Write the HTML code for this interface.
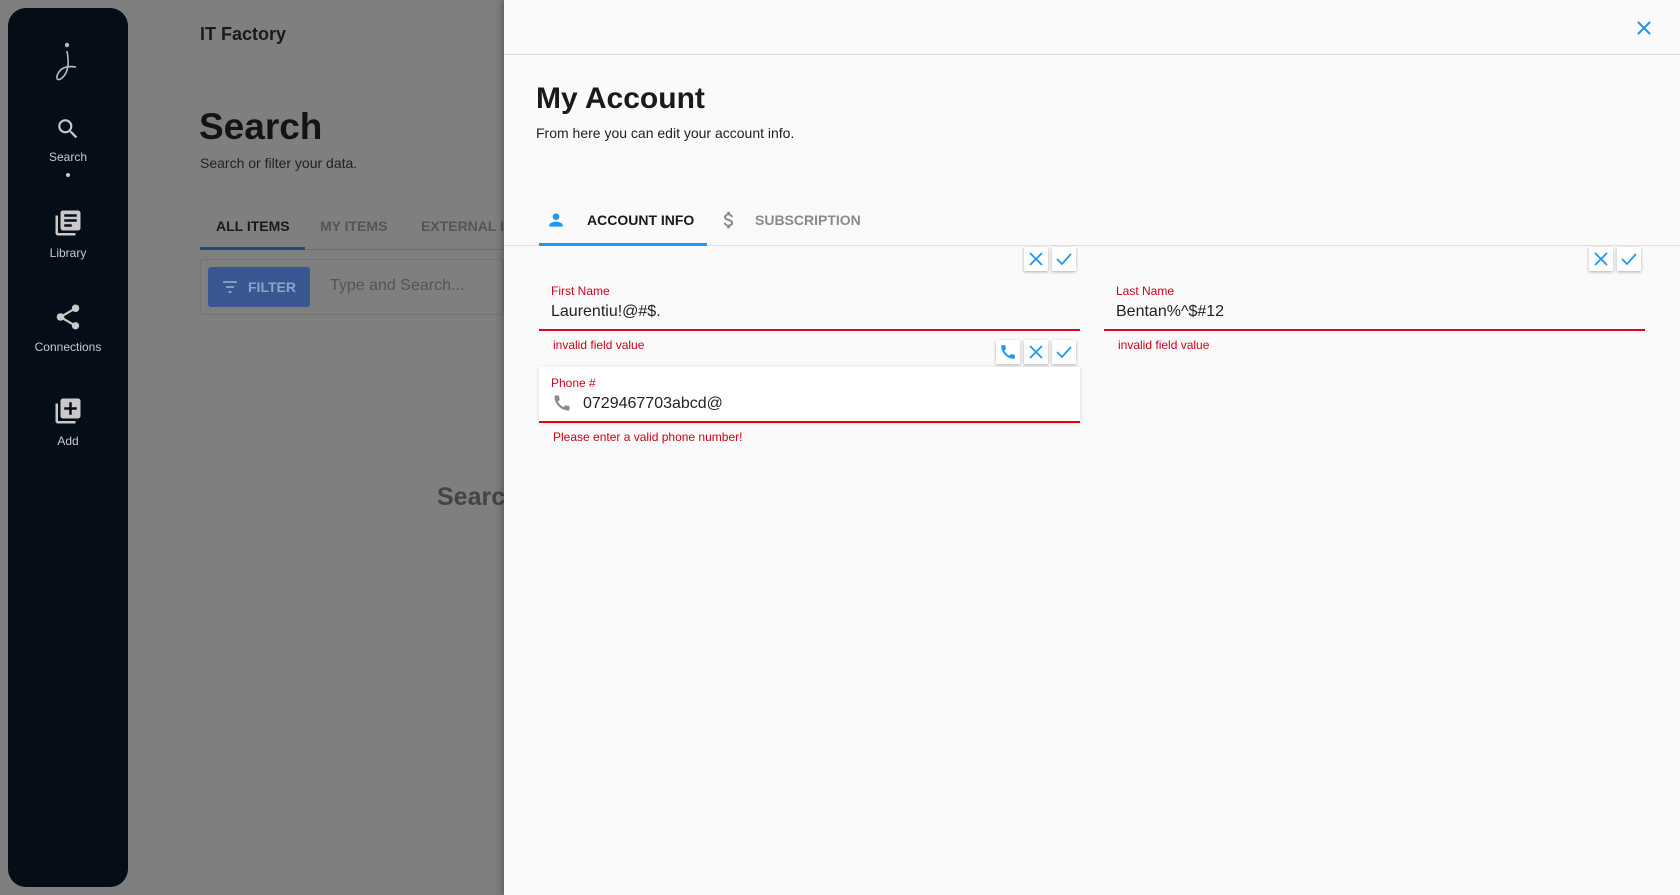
<!DOCTYPE html>
<html><head><meta charset="utf-8"><style>
*{box-sizing:border-box;margin:0;padding:0}
body{width:1680px;height:895px;overflow:hidden;background:#7f7f7f;font-family:"Liberation Sans",Roboto,sans-serif;position:relative}
.a{position:absolute}
.side{left:8px;top:8px;width:120px;height:879px;background:#040d18;border-radius:18px}
.nav{position:absolute;left:0;width:120px;text-align:center;color:#c9c9c9;font-size:12px}
.nav svg{display:block;margin:0 auto 8px}
.panel{left:504px;top:0;width:1176px;height:895px;background:#fafafa;box-shadow:-3px 0 6px rgba(0,0,0,.25)}
.btn{position:absolute;width:24px;height:24px;background:#fff;box-shadow:0 1px 3px rgba(0,0,0,.3);display:flex;align-items:center;justify-content:center}
.lbl{position:absolute;font-size:12px;color:#d0021b}
.val{position:absolute;font-size:16px;color:#222}
.err{position:absolute;font-size:12px;color:#d0021b}
.line{position:absolute;height:2px;background:#e0001b}
</style></head><body>
<div class="a side">
 <svg class="a" style="left:44px;top:26px" width="32" height="50" viewBox="0 0 32 50"><circle cx="15" cy="11" r="2.2" fill="#bbb"/><path d="M15 17 C17 28 17 38 10 44 C5 48 3 44 7 38 C10 33 17 32 24 33" stroke="#bbb" stroke-width="1.6" fill="none"/></svg>
 <div class="nav" style="top:108px"><svg width="26" height="26" viewBox="0 0 24 24"><path fill="#c9c9c9" d="M15.5 14h-.79l-.28-.27A6.47 6.47 0 0 0 16 9.5 6.5 6.5 0 1 0 9.5 16c1.61 0 3.09-.59 4.23-1.57l.27.28v.79l5 4.99L20.49 19l-4.99-5zm-6 0C7.01 14 5 11.99 5 9.5S7.01 5 9.5 5 14 7.01 14 9.5 11.99 14 9.5 14z"/></svg>Search<div style="width:4px;height:4px;border-radius:2px;background:#c9c9c9;margin:9px auto 0"></div></div>
 <div class="nav" style="top:200px"><svg width="30" height="30" viewBox="0 0 24 24"><path fill="#c9c9c9" d="M4 6H2v14c0 1.1.9 2 2 2h14v-2H4V6zm16-4H8c-1.1 0-2 .9-2 2v12c0 1.1.9 2 2 2h12c1.1 0 2-.9 2-2V4c0-1.1-.9-2-2-2zm-1 9H9V9h10v2zm-4 4H9v-2h6v2zm4-8H9V5h10v2z"/></svg>Library</div>
 <div class="nav" style="top:294px"><svg width="30" height="30" viewBox="0 0 24 24"><path fill="#c9c9c9" d="M18 16.08c-.76 0-1.44.3-1.96.77L8.91 12.7c.05-.23.09-.46.09-.7s-.04-.47-.09-.7l7.05-4.11A2.99 2.99 0 0 0 21 5a3 3 0 1 0-5.91.7L8.04 9.81A2.99 2.99 0 0 0 3 12a3 3 0 0 0 5.04 2.19l7.12 4.16c-.05.21-.08.43-.08.65a2.92 2.92 0 1 0 2.92-2.92z"/></svg>Connections</div>
 <div class="nav" style="top:388px"><svg width="30" height="30" viewBox="0 0 24 24"><path fill="#c9c9c9" d="M4 6H2v14c0 1.1.9 2 2 2h14v-2H4V6zm16-4H8c-1.1 0-2 .9-2 2v12c0 1.1.9 2 2 2h12c1.1 0 2-.9 2-2V4c0-1.1-.9-2-2-2zm-1 9h-4v4h-2v-4H9V9h4V5h2v4h4v2z"/></svg>Add</div>
</div>
<div class="a" style="left:200px;top:24px;font-size:18px;font-weight:bold;color:#1a1a1a">IT Factory</div>
<div class="a" style="left:199px;top:106px;font-size:37px;font-weight:bold;color:#141414">Search</div>
<div class="a" style="left:200px;top:155px;font-size:14px;color:#222">Search or filter your data.</div>
<div class="a" style="left:216px;top:218px;font-size:14px;font-weight:bold;color:#1a1a1a">ALL ITEMS</div>
<div class="a" style="left:320px;top:218px;font-size:14px;font-weight:bold;color:#555">MY ITEMS</div>
<div class="a" style="left:421px;top:218px;font-size:14px;font-weight:bold;color:#555">EXTERNAL ITEMS</div>
<div class="a" style="left:200px;top:249px;width:304px;height:1px;background:#6f6f6f"></div>
<div class="a" style="left:200px;top:247px;width:105px;height:3px;background:#1e4b80"></div>
<div class="a" style="left:200px;top:259px;width:304px;height:56px;border:1px solid #747474;border-radius:3px"></div>
<div class="a" style="left:208px;top:267px;width:102px;height:40px;background:#3a5791;border-radius:3px;color:#8ea3c8;font-size:14px;font-weight:bold;line-height:40px;padding-left:40px">FILTER<svg class="a" style="left:14px;top:13px" width="16" height="14" viewBox="0 0 16 14"><path d="M1 2h14M4 7h8M6.5 12h3" stroke="#8ea3c8" stroke-width="1.8"/></svg></div>
<div class="a" style="left:330px;top:277px;font-size:16px;color:#555">Type and Search...</div>
<div class="a" style="left:437px;top:483px;font-size:25px;font-weight:bold;color:#444">Search</div>

<div class="a panel">
 <div class="a" style="left:0;top:54px;width:1176px;height:1px;background:#ddd"></div>
 <svg class="a" style="left:1132px;top:20px" width="16" height="16" viewBox="0 0 16 16"><path d="M2 2L14 14M14 2L2 14" stroke="#2196f3" stroke-width="2"/></svg>
 <div class="a" style="left:32px;top:82px;font-size:30px;font-weight:bold;color:#1a1a1a">My Account</div>
 <div class="a" style="left:32px;top:125px;font-size:14px;color:#222">From here you can edit your account info.</div>
 <svg class="a" style="left:42px;top:210px" width="20" height="20" viewBox="0 0 24 24"><path fill="#2196f3" d="M12 12c2.21 0 4-1.790 4-4s-1.79-4-4-4-4 1.79-4 4 1.79 4 4 4zm0 2c-2.670 0-8 1.34-8 4v2h16v-2c0-2.66-5.33-4-8-4z"/></svg>
 <div class="a" style="left:83px;top:212px;font-size:14px;font-weight:bold;color:#1a1a1a">ACCOUNT INFO</div>
 <svg class="a" style="left:214px;top:209px" width="22" height="22" viewBox="0 0 24 24"><path fill="#8a8a8a" d="M11.8 10.9c-2.27-.59-3-1.2-3-2.15 0-1.09 1.01-1.85 2.7-1.85 1.78 0 2.44.85 2.5 2.1h2.21c-.07-1.72-1.12-3.3-3.21-3.81V3h-3v2.16c-1.94.42-3.5 1.68-3.5 3.61 0 2.31 1.91 3.46 4.7 4.130 2.5.6 3 1.48 3 2.41 0 .69-.49 1.79-2.7 1.79-2.06 0-2.87-.92-2.98-2.1h-2.2c.12 2.19 1.76 3.42 3.68 3.83V21h3v-2.15c1.95-.37 3.5-1.5 3.5-3.55 0-2.84-2.43-3.81-4.7-4.4z"/></svg>
 <div class="a" style="left:251px;top:212px;font-size:14px;font-weight:bold;color:#8a8a8a">SUBSCRIPTION</div>
 <div class="a" style="left:0;top:245px;width:1176px;height:1px;background:#e2e2e2"></div>
 <div class="a" style="left:35px;top:243px;width:168px;height:3px;background:#2196f3"></div>

 <div class="btn" style="left:520px;top:247px"><svg width="14" height="14" viewBox="0 0 14 14"><path d="M1 1L13 13M13 1L1 13" stroke="#2196f3" stroke-width="1.8"/></svg></div>
 <div class="btn" style="left:548px;top:247px"><svg width="16" height="14" viewBox="0 0 16 14"><path d="M1 7L6 12L15 2" stroke="#2196f3" stroke-width="1.8" fill="none"/></svg></div>
 <div class="btn" style="left:1085px;top:247px"><svg width="14" height="14" viewBox="0 0 14 14"><path d="M1 1L13 13M13 1L1 13" stroke="#2196f3" stroke-width="1.8"/></svg></div>
 <div class="btn" style="left:1113px;top:247px"><svg width="16" height="14" viewBox="0 0 16 14"><path d="M1 7L6 12L15 2" stroke="#2196f3" stroke-width="1.8" fill="none"/></svg></div>

 <div class="lbl" style="left:47px;top:284px">First Name</div>
 <div class="val" style="left:47px;top:303px">Laurentiu!@#$.</div>
 <div class="line" style="left:35px;top:329px;width:541px"></div>
 <div class="err" style="left:49px;top:338px">invalid field value</div>

 <div class="lbl" style="left:612px;top:284px">Last Name</div>
 <div class="val" style="left:612px;top:303px">Bentan%^$#12</div>
 <div class="line" style="left:600px;top:329px;width:541px"></div>
 <div class="err" style="left:614px;top:338px">invalid field value</div>

 <div class="btn" style="left:492px;top:340px"><svg width="18" height="18" viewBox="0 0 24 24"><path fill="#2196f3" d="M20.01 15.38c-1.23 0-2.42-.2-3.53-.56a.977.977 0 0 0-1.01.24l-1.57 1.97c-2.83-1.35-5.48-3.9-6.89-6.83l1.95-1.66c.27-.28.35-.67.24-1.02-.37-1.11-.56-2.3-.56-3.53 0-.54-.45-.99-.99-.99H4.19C3.65 3 3 3.24 3 3.99 3 13.28 10.73 21 20.01 21c.71 0 .99-.63.99-1.18v-3.45c0-.54-.45-.99-.99-.99z"/></svg></div>
 <div class="btn" style="left:520px;top:340px"><svg width="14" height="14" viewBox="0 0 14 14"><path d="M1 1L13 13M13 1L1 13" stroke="#2196f3" stroke-width="1.8"/></svg></div>
 <div class="btn" style="left:548px;top:340px"><svg width="16" height="14" viewBox="0 0 16 14"><path d="M1 7L6 12L15 2" stroke="#2196f3" stroke-width="1.8" fill="none"/></svg></div>

 <div class="a" style="left:35px;top:367px;width:541px;height:55px;background:#fff;box-shadow:0 1px 4px rgba(0,0,0,.15)"></div>
 <div class="lbl" style="left:47px;top:376px">Phone #</div>
 <svg class="a" style="left:48px;top:393px" width="20" height="20" viewBox="0 0 24 24"><path fill="#8a8a8a" d="M20.01 15.38c-1.23 0-2.42-.2-3.53-.56a.977.977 0 0 0-1.01.24l-1.57 1.97c-2.83-1.35-5.48-3.9-6.89-6.83l1.95-1.66c.27-.28.35-.67.24-1.02-.37-1.11-.56-2.3-.56-3.53 0-.54-.45-.99-.99-.99H4.19C3.65 3 3 3.24 3 3.99 3 13.28 10.73 21 20.01 21c.71 0 .99-.63.99-1.18v-3.45c0-.54-.45-.99-.99-.99z"/></svg>
 <div class="val" style="left:79px;top:395px">0729467703abcd@</div>
 <div class="line" style="left:35px;top:421px;width:541px"></div>
 <div class="err" style="left:49px;top:430px">Please enter a valid phone number!</div>
</div>
</body></html>
